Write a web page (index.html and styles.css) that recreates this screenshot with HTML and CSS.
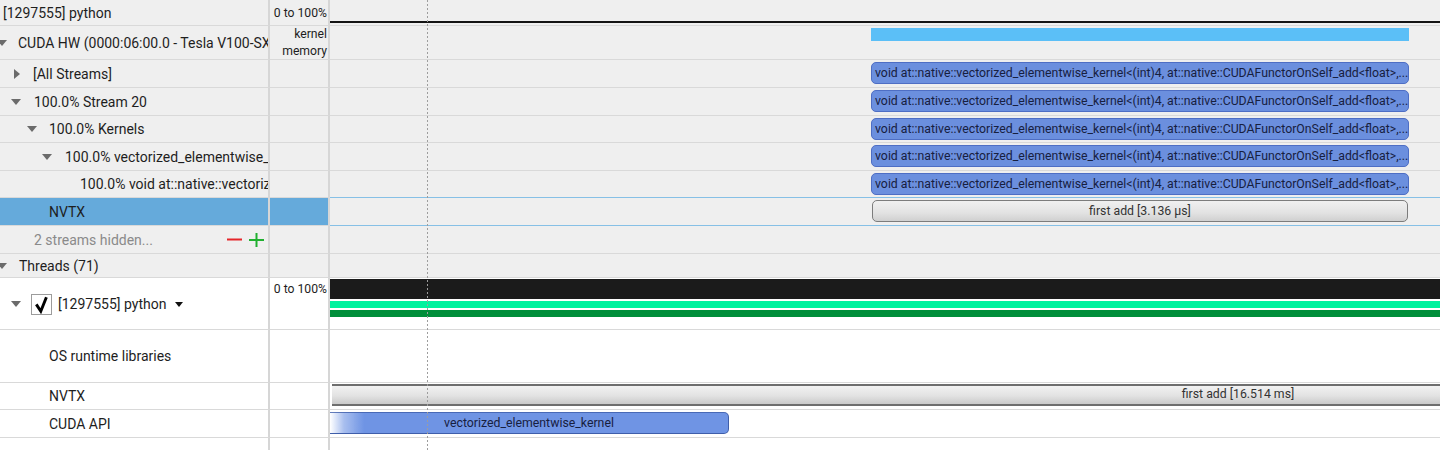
FILE: index.html
```html
<!DOCTYPE html>
<html>
<head>
<meta charset="utf-8">
<link rel="stylesheet" href="styles.css">
</head>
<body>
<div class="view">
  <div class="row h26">
    <div class="lab pl3">[1297555] python</div>
    <div class="mid">0 to 100%</div>
    <div class="lane"><div class="util-line"></div></div>
  </div>
  <div class="row h34">
    <div class="lab"><svg class="tri-d edge" width="10" height="6" viewBox="0 0 10 6"><polygon points="0,0 10,0 5,6"/></svg><span>CUDA HW (0000:06:00.0 - Tesla V100-SXM2-32GB)</span></div>
    <div class="mid two"><span>kernel</span><span>memory</span></div>
    <div class="lane"><div class="bar mem" style="left:541px;width:538px"></div></div>
  </div>
  <div class="row h28">
    <div class="lab pl14"><svg class="tri-r" width="6" height="10" viewBox="0 0 6 10"><polygon points="0,0 6,5 0,10"/></svg><span>[All Streams]</span></div>
    <div class="mid"></div>
    <div class="lane"><div class="bar kern" style="left:541px;width:538px">void at::native::vectorized_elementwise_kernel&lt;(int)4, at::native::CUDAFunctorOnSelf_add&lt;float&gt;,...</div></div>
  </div>
  <div class="row h28">
    <div class="lab pl11"><svg class="tri-d" width="10" height="6" viewBox="0 0 10 6"><polygon points="0,0 10,0 5,6"/></svg><span>100.0% Stream 20</span></div>
    <div class="mid"></div>
    <div class="lane"><div class="bar kern" style="left:541px;width:538px">void at::native::vectorized_elementwise_kernel&lt;(int)4, at::native::CUDAFunctorOnSelf_add&lt;float&gt;,...</div></div>
  </div>
  <div class="row h27">
    <div class="lab pl27"><svg class="tri-d" width="10" height="6" viewBox="0 0 10 6"><polygon points="0,0 10,0 5,6"/></svg><span>100.0% Kernels</span></div>
    <div class="mid"></div>
    <div class="lane"><div class="bar kern" style="left:541px;width:538px">void at::native::vectorized_elementwise_kernel&lt;(int)4, at::native::CUDAFunctorOnSelf_add&lt;float&gt;,...</div></div>
  </div>
  <div class="row h28">
    <div class="lab pl42"><svg class="tri-d" width="10" height="6" viewBox="0 0 10 6"><polygon points="0,0 10,0 5,6"/></svg><span>100.0% vectorized_elementwise_kernel</span></div>
    <div class="mid"></div>
    <div class="lane"><div class="bar kern" style="left:541px;width:538px">void at::native::vectorized_elementwise_kernel&lt;(int)4, at::native::CUDAFunctorOnSelf_add&lt;float&gt;,...</div></div>
  </div>
  <div class="row h27">
    <div class="lab pl80"><span>100.0% void at::native::vectorized_elementwise_kernel</span></div>
    <div class="mid"></div>
    <div class="lane sel-edge"><div class="bar kern" style="left:541px;width:538px">void at::native::vectorized_elementwise_kernel&lt;(int)4, at::native::CUDAFunctorOnSelf_add&lt;float&gt;,...</div></div>
  </div>
  <div class="row h28 selected">
    <div class="lab pl49"><span>NVTX</span></div>
    <div class="mid"></div>
    <div class="lane sel-edge"><div class="bar range" style="left:542px;width:536px">first add [3.136 μs]</div></div>
  </div>
  <div class="row h28">
    <div class="lab pl34 hidden-row"><span class="muted">2 streams hidden...</span>
      <svg class="minus" width="15" height="3" viewBox="0 0 15 3"><rect x="0" y="0.5" width="15" height="2" fill="#e5262a"/></svg>
      <svg class="plus" width="15" height="14" viewBox="0 0 15 14"><rect x="0" y="6" width="15" height="2" fill="#20b030"/><rect x="6.5" y="0" width="2" height="14" fill="#20b030"/></svg>
    </div>
    <div class="mid"></div>
    <div class="lane"></div>
  </div>
  <div class="row h24">
    <div class="lab"><svg class="tri-d edge t" width="10" height="6" viewBox="0 0 10 6"><polygon points="0,0 10,0 5,6"/></svg><span>Threads (71)</span></div>
    <div class="mid"></div>
    <div class="lane"></div>
  </div>
  <div class="row h52 white">
    <div class="lab pl11"><svg class="tri-d" width="10" height="6" viewBox="0 0 10 6"><polygon points="0,0 10,0 5,6"/></svg>
      <span class="checkbox"><svg width="19" height="19" viewBox="0 0 19 19"><path d="M4.3 9.4 L8.8 16.2 L14.4 2.2" fill="none" stroke="#000" stroke-width="2.9" stroke-linejoin="miter"/></svg></span>
      <span>[1297555] python</span>
      <svg class="drop" width="8" height="5" viewBox="0 0 8 5"><polygon points="0,0 8,0 4,5"/></svg>
    </div>
    <div class="mid top">0 to 100%</div>
    <div class="lane">
      <div class="util cpu"></div>
      <div class="util g1"></div>
      <div class="util g2"></div>
    </div>
  </div>
  <div class="row h53 white">
    <div class="lab pl49"><span>OS runtime libraries</span></div>
    <div class="mid"></div>
    <div class="lane"></div>
  </div>
  <div class="row h27 white">
    <div class="lab pl49"><span>NVTX</span></div>
    <div class="mid"></div>
    <div class="lane"><div class="bar trange" style="left:2px;width:1812px">first add [16.514 ms]</div></div>
  </div>
  <div class="row h28 white">
    <div class="lab pl49"><span>CUDA API</span></div>
    <div class="mid"></div>
    <div class="lane"><div class="bar api" style="left:0;width:399px">vectorized_elementwise_kernel</div></div>
  </div>
  <div class="row fill white">
    <div class="lab"></div>
    <div class="mid"></div>
    <div class="lane"></div>
  </div>
  <div class="cursor"></div>
</div>
</body>
</html>
```
FILE: styles.css
```css
* { box-sizing: border-box; }
html, body { margin: 0; padding: 0; }
body {
  background: #efefef;
  font-family: Roboto, "Liberation Sans", Arial, sans-serif;
  color: #1e1e1e;
}
.view {
  position: relative;
  width: 1440px;
  height: 450px;
  overflow: hidden;
  display: flex;
  flex-direction: column;
}
.row {
  display: flex;
  flex: none;
}
.row > div {
  border-bottom: 1px solid #d9d9d9;
}
.h24 { height: 24px; }
.h26 { height: 26px; }
.h27 { height: 27px; }
.h28 { height: 28px; }
.h34 { height: 34px; }
.h52 { height: 52px; }
.h53 { height: 53px; }
.fill { flex: 1; }
.fill > div { border-bottom: none; }

.lab {
  width: 270px;
  border-right: 2px solid #d6d6d6;
  display: flex;
  align-items: center;
  font-size: 14px;
  white-space: nowrap;
  overflow: hidden;
}
.lab span { flex: none; }
.pl3 { padding-left: 3px; }
.pl11 { padding-left: 11px; }
.pl14 { padding-left: 14px; }
.pl27 { padding-left: 27px; }
.pl34 { padding-left: 34px; }
.pl42 { padding-left: 42px; }
.pl49 { padding-left: 49px; }
.pl80 { padding-left: 80px; }

.tri-d { flex: none; fill: #6b6b6b; margin-right: 13px; }
.pl27 .tri-d { margin-right: 12px; }
.pl11 .tri-d { margin-right: 13px; }
.tri-d.edge { margin-left: -3px; margin-right: 11px; }
.tri-d.edge.t { margin-right: 12px; }
.tri-r { flex: none; fill: #6b6b6b; margin-right: 13px; }

.h52 .tri-d { margin-right: 10px; }
.checkbox {
  width: 21px;
  height: 21px;
  border: 1px solid #9c9c9c;
  background: #fff;
  display: inline-flex;
  align-items: center;
  justify-content: center;
  margin-right: 6px;
  margin-top: 1px;
}
.checkbox svg { display: block; }
.drop { flex: none; fill: #111; margin-left: 9px; margin-top: 1px; }

.hidden-row { padding-right: 4px; }
.muted { color: #8a8a8a; }
.minus { margin-left: auto; margin-right: 7px; flex: none; }
.plus { flex: none; margin-top: 1px; }

.mid {
  width: 60px;
  border-right: 2px solid #d6d6d6;
  font-size: 12.2px;
  text-align: right;
  padding-right: 1px;
  display: flex;
  align-items: center;
  justify-content: flex-end;
  white-space: nowrap;
}
.mid.two {
  flex-direction: column;
  align-items: flex-end;
  justify-content: center;
  line-height: 17px;
}
.mid.top {
  align-items: flex-start;
  padding-top: 3px;
  line-height: 16px;
}

.lane {
  flex: 1;
  position: relative;
  overflow: hidden;
}
.lane.sel-edge { border-bottom-color: #86c0e6; }

.selected .lab, .selected .mid { background: #65aadb; }

.white > div { background: #fff; }

.util-line {
  position: absolute;
  left: 0; right: 0;
  top: 21px;
  height: 2px;
  background: #141414;
}
.util { position: absolute; left: 0; right: 0; }
.util.cpu { top: 1px; height: 20px; background: #1b1b1b; }
.util.g1 { top: 23px; height: 7px; background: #00f29e; }
.util.g2 { top: 32px; height: 7px; background: #008e3a; }

.bar {
  position: absolute;
  white-space: nowrap;
  overflow: hidden;
  font-size: 12.3px;
  line-height: 20px;
}
.bar.mem {
  top: 2px;
  height: 13px;
  background: #5bbff7;
}
.bar.kern {
  top: 2px;
  height: 22px;
  background: #6b8fde;
  border: 1px solid #4e6ec4;
  border-radius: 5px;
  color: #17203f;
  padding-left: 3px;
}
.bar.range {
  top: 2px;
  height: 22px;
  background: linear-gradient(to bottom, #f0f0f0, #e2e2e2 60%, #d0d0d0);
  border: 1px solid #7c7c7c;
  border-radius: 5px;
  color: #333;
  text-align: center;
}
.bar.trange {
  top: 1px;
  height: 22px;
  background: linear-gradient(to bottom, #f2f2f2, #e2e2e2 55%, #cacaca);
  border-top: 2px solid #6e6e6e;
  border-bottom: 2px solid #6e6e6e;
  color: #333;
  text-align: center;
  line-height: 17px;
}
.bar.api {
  top: 2px;
  height: 22px;
  background: linear-gradient(to right, rgba(111,148,228,0) 0, rgba(111,148,228,0.6) 14px, #6f94e4 34px);
  border: 1px solid #3f5eaa;
  border-left: none;
  border-top-color: rgba(63,94,170,0.8);
  border-radius: 0 5px 5px 0;
  color: #17203f;
  text-align: center;
  padding-left: 0;
}

.cursor {
  position: absolute;
  left: 427px;
  top: 0;
  bottom: 0;
  width: 1px;
  background: repeating-linear-gradient(to bottom, #9d9d9d 0, #9d9d9d 2px, transparent 2px, transparent 4px);
}
```
